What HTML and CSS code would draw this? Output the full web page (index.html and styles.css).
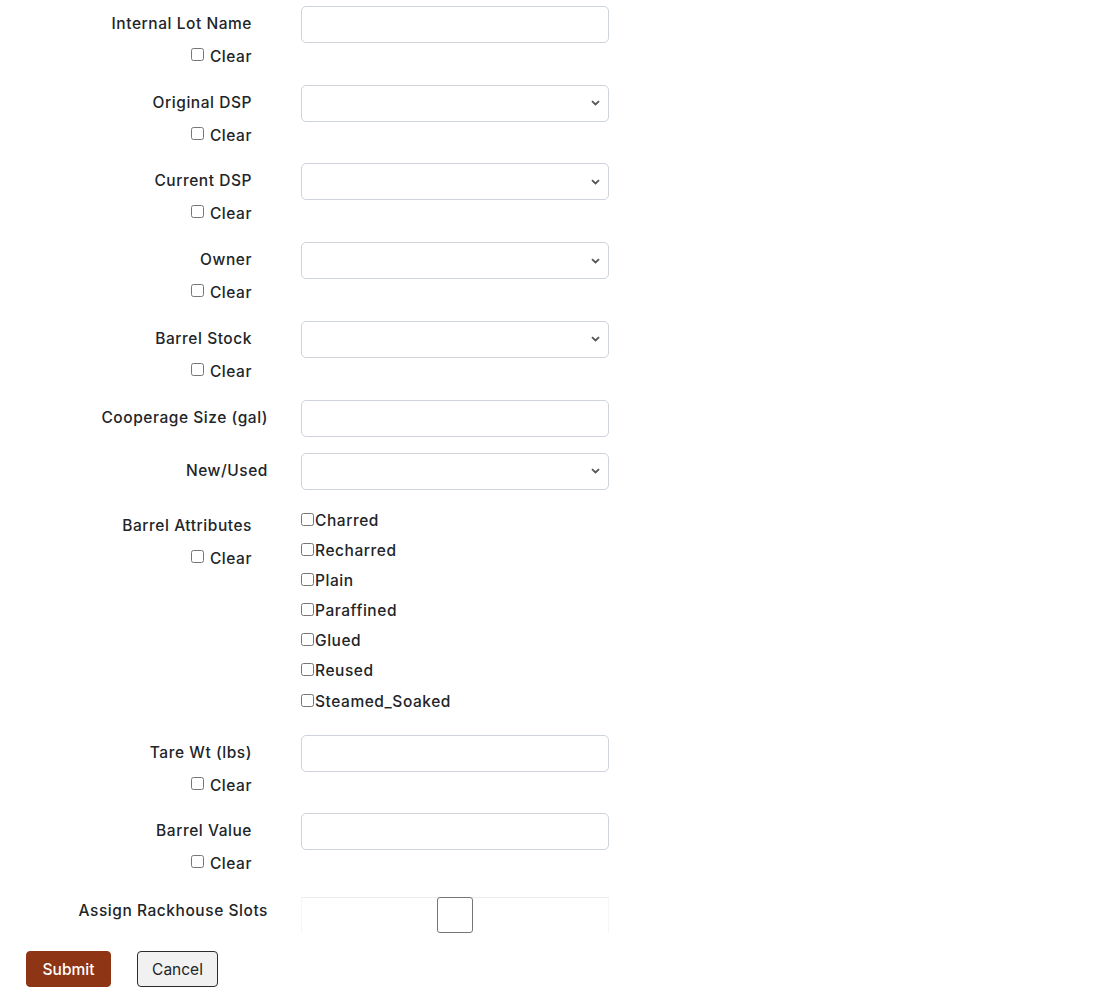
FILE: index.html
```html
<!DOCTYPE html>
<html lang="en">
<head>
    <meta charset="UTF-8">
    <meta name="viewport" content="width=device-width, initial-scale=1.0">
    <title>Edit Barrels</title>
    <link rel="stylesheet" href="styles.css">
</head>
<body>
    <form class="barrel-form">
        <div class="form-row">
            <div class="label-col has-clear">
                <label for="lot-name">Internal Lot Name</label>
                <label class="clear"><input type="checkbox"> Clear</label>
            </div>
            <input type="text" id="lot-name" class="field">
        </div>

        <div class="form-row">
            <div class="label-col has-clear">
                <label for="orig-dsp">Original DSP</label>
                <label class="clear"><input type="checkbox"> Clear</label>
            </div>
            <select id="orig-dsp" class="field"><option></option></select>
        </div>

        <div class="form-row">
            <div class="label-col has-clear">
                <label for="cur-dsp">Current DSP</label>
                <label class="clear"><input type="checkbox"> Clear</label>
            </div>
            <select id="cur-dsp" class="field"><option></option></select>
        </div>

        <div class="form-row">
            <div class="label-col has-clear">
                <label for="owner">Owner</label>
                <label class="clear"><input type="checkbox"> Clear</label>
            </div>
            <select id="owner" class="field"><option></option></select>
        </div>

        <div class="form-row">
            <div class="label-col has-clear">
                <label for="stock">Barrel Stock</label>
                <label class="clear"><input type="checkbox"> Clear</label>
            </div>
            <select id="stock" class="field"><option></option></select>
        </div>

        <div class="form-row">
            <div class="label-col">
                <label for="size">Cooperage Size (gal)</label>
            </div>
            <input type="text" id="size" class="field">
        </div>

        <div class="form-row">
            <div class="label-col">
                <label for="new-used">New/Used</label>
            </div>
            <select id="new-used" class="field"><option></option></select>
        </div>

        <div class="form-row">
            <div class="label-col has-clear attr-label">
                <label>Barrel Attributes</label>
                <label class="clear"><input type="checkbox"> Clear</label>
            </div>
            <div class="attr-list">
                <label><input type="checkbox">Charred</label>
                <label><input type="checkbox">Recharred</label>
                <label><input type="checkbox">Plain</label>
                <label><input type="checkbox">Paraffined</label>
                <label><input type="checkbox">Glued</label>
                <label><input type="checkbox">Reused</label>
                <label><input type="checkbox">Steamed_Soaked</label>
            </div>
        </div>

        <div class="form-row">
            <div class="label-col has-clear">
                <label for="tare">Tare Wt (lbs)</label>
                <label class="clear"><input type="checkbox"> Clear</label>
            </div>
            <input type="text" id="tare" class="field">
        </div>

        <div class="form-row">
            <div class="label-col has-clear">
                <label for="value">Barrel Value</label>
                <label class="clear"><input type="checkbox"> Clear</label>
            </div>
            <input type="text" id="value" class="field">
        </div>

        <div class="form-row slots-row">
            <div class="label-col slots-label">
                <label>Assign Rackhouse Slots</label>
            </div>
            <div class="slots-box">
                <button type="button" class="slot-btn"></button>
            </div>
        </div>

        <div class="actions">
            <button type="submit" class="btn btn-submit">Submit</button>
            <button type="button" class="btn btn-cancel">Cancel</button>
        </div>
    </form>
</body>
</html>
```

FILE: styles.css
```css
body {
    margin: 0;
    font-family: Inter, 'Noto Sans', sans-serif;
    font-size: 15.5px;
    font-weight: 500;
    letter-spacing: 0.55px;
    color: #212529;
    background: #fff;
}
.barrel-form {
    padding: 6px 0 0 26px;
}
.form-row {
    display: flex;
    gap: 33px;
    align-items: flex-start;
    margin-bottom: 16px;
}
.label-col {
    width: 242px;
    display: flex;
    flex-direction: column;
    align-items: flex-end;
    padding-top: 7px;
    line-height: 22px;
}
.label-col.has-clear {
    padding-right: 16px;
    width: 226px;
}
.label-col.attr-label {
    padding-top: 9px;
}
.clear {
    margin-top: 10px;
    line-height: 23.7px;
}
.clear input {
    margin: 0 1px 0 0;
    width: 13px;
    height: 13px;
    vertical-align: 1px;
}
.field {
    width: 308px;
    height: 37px;
    box-sizing: border-box;
    border: 1px solid #ced4da;
    border-radius: 5px;
    background: #fff;
    font: inherit;
    padding: 6px 12px;
}
select.field {
    appearance: none;
    -webkit-appearance: none;
    background: #fff url("data:image/svg+xml,%3Csvg xmlns='http://www.w3.org/2000/svg' width='9' height='6' viewBox='0 0 9 6'%3E%3Cpath d='M1 1.2l3.5 3.3 3.5-3.3' fill='none' stroke='%23555' stroke-width='1.8'/%3E%3C/svg%3E") no-repeat right 8px center;
}
.attr-list {
    display: flex;
    flex-direction: column;
    line-height: 30.17px;
    padding-bottom: 2px;
}
.attr-list input {
    margin: 0 1px 0 0;
    width: 13px;
    height: 13px;
    vertical-align: 0;
}
.slots-row {
    margin-top: 21px;
    margin-bottom: 18px;
}
.slots-label {
    padding-top: 3px;
}
.slots-box {
    width: 308px;
    height: 36px;
    box-sizing: border-box;
    border-top: 1px solid #ececec;
    border-left: 1px solid #f6f6f6;
    border-right: 1px solid #f6f6f6;
    display: flex;
    justify-content: center;
}
.slot-btn {
    width: 36px;
    height: 36px;
    margin-top: -1px;
    border: 1px solid #767676;
    border-radius: 3px;
    background: #fff;
    padding: 0;
}
.actions {
    display: flex;
    gap: 26px;
}
.btn {
    height: 36px;
    border-radius: 4px;
    font: inherit;
    padding: 0;
}
.btn-submit {
    width: 85px;
    background: #8d3515;
    border: 1px solid #8d3515;
    color: #fff;
}
.btn-cancel {
    width: 81px;
    background: #f1f1f1;
    border: 1px solid #2b2b2b;
    color: #212529;
    font-weight: 400;
}
```
